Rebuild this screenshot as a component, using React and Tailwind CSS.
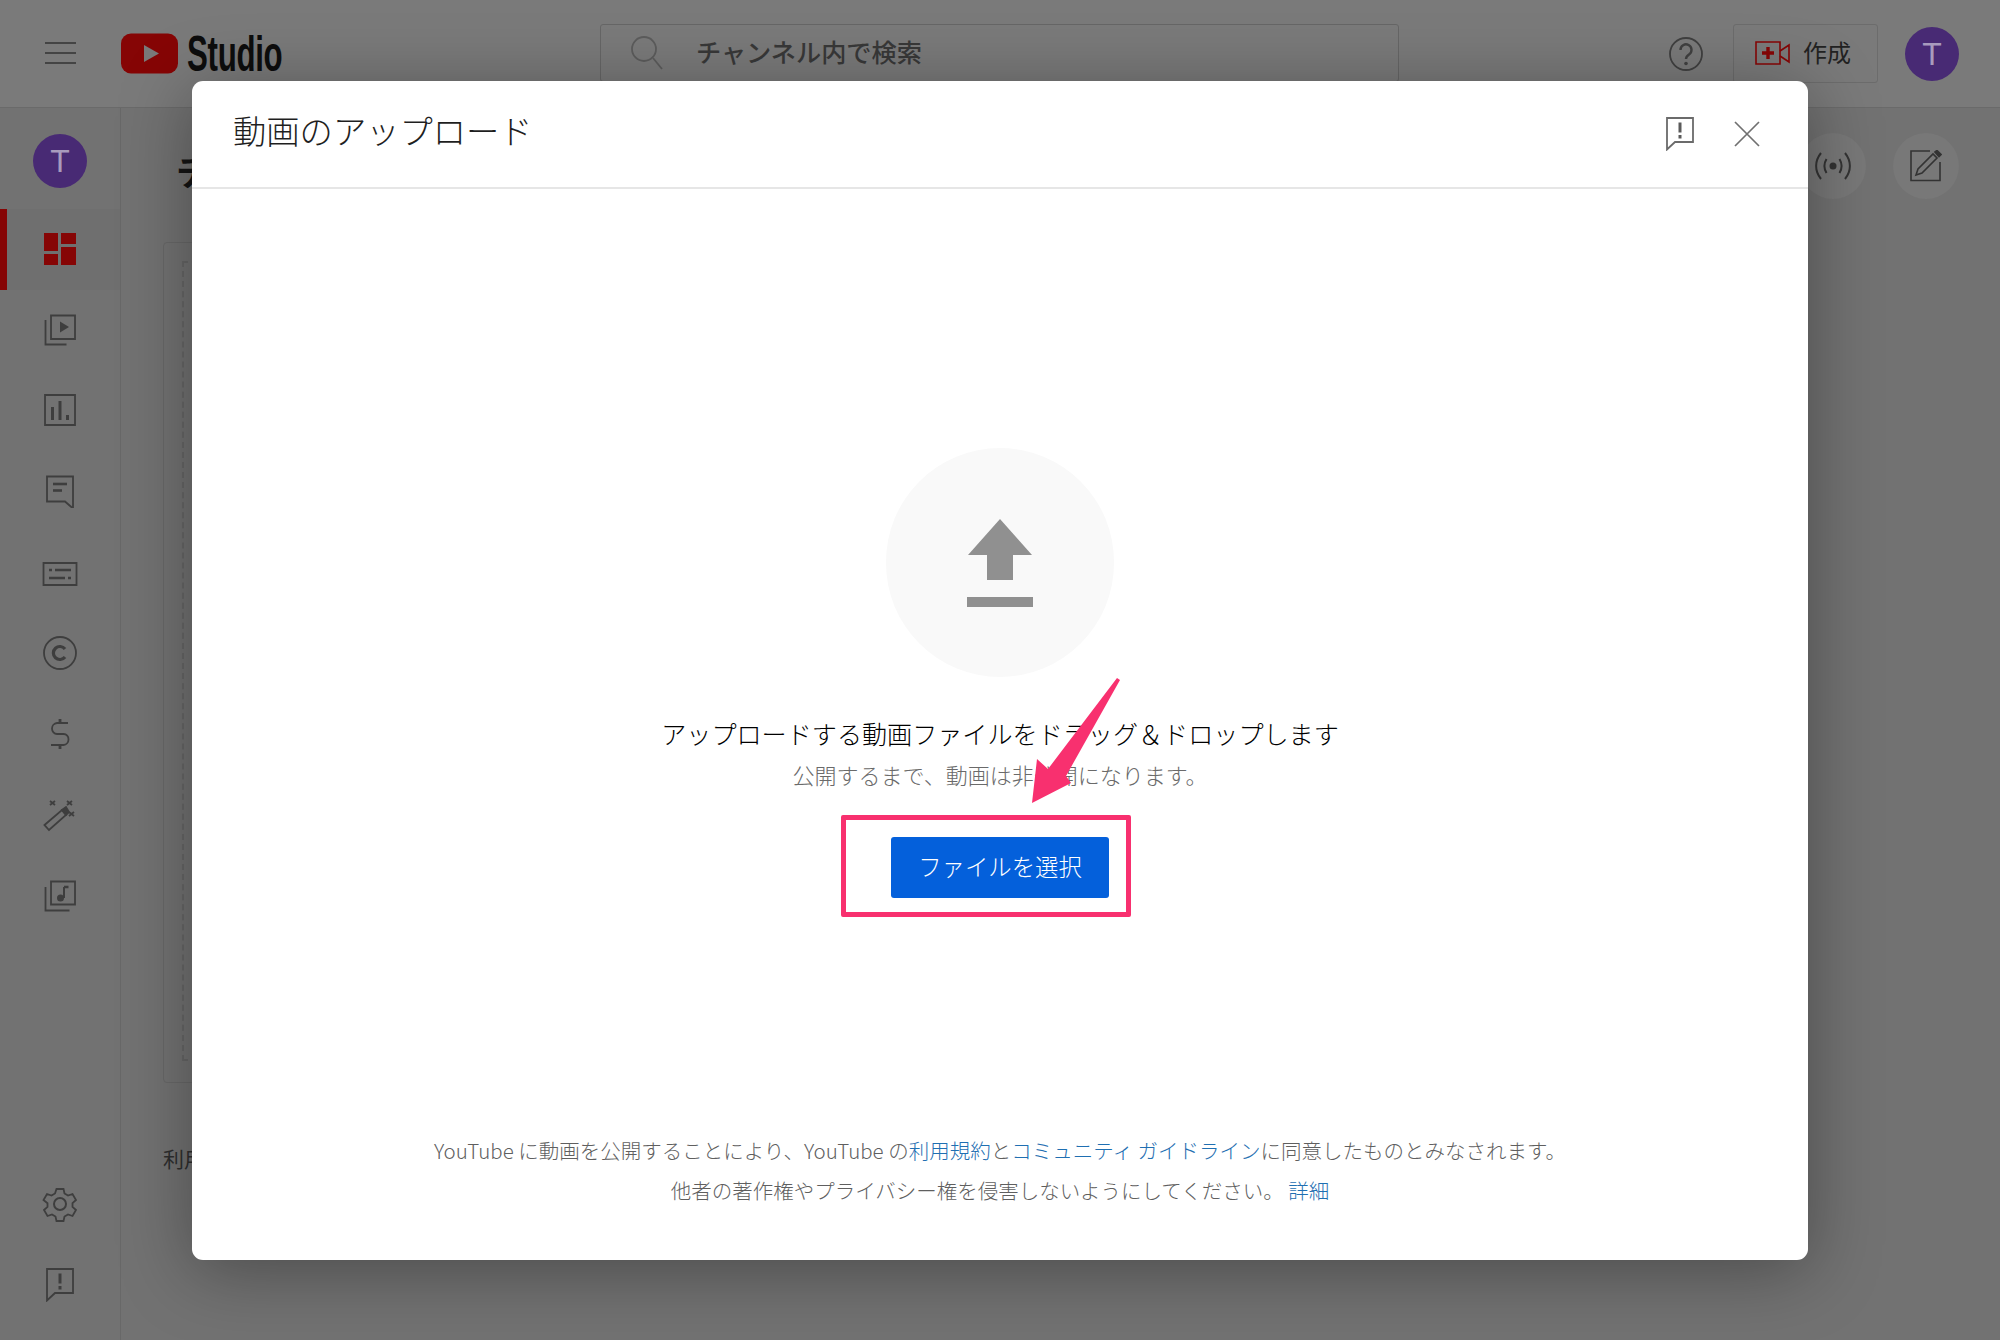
import React from "react";

const JP = { fontFamily: '"Noto Sans CJK JP", sans-serif' };

function I({ children, w = 36, h = 36, vb = "0 0 36 36", className = "" }) {
  return (
    <svg width={w} height={h} viewBox={vb} fill="none" stroke="#3e3e3e" strokeWidth="1.800" className={className}>
      {children}
    </svg>
  );
}

const rows = [
  <I key="content">
    <path d="M9 4.500h24v23.500H9z" />
    <path d="M3.500 9v24.500h21" />
    <path d="M18 10.500l9 5.500-9 5.500z" fill="#3e3e3e" stroke="none" />
  </I>,
  <I key="analytics">
    <path d="M3 3h30v30H3z" />
    <path d="M10.500 15v13M18 9v19M25.500 23v5" strokeWidth="3" />
  </I>,
  <I key="comments" className="mt-[-2px]">
    <path d="M5 4.500h26v32l-8-7H5z" />
    <path d="M11 12h14" strokeWidth="2.600" />
    <path d="M11 18.500h9" strokeWidth="2.600" />
  </I>,
  <I key="subtitles" className="mt-[4px]">
    <path d="M1.500 7h33v22H1.500z" />
    <path d="M7 14h3M13 14h16M7 22h16M26 22h3" strokeWidth="2.600" />
  </I>,
  <I key="copyright">
    <circle cx="18" cy="18" r="16" />
    <path d="M23 14a6.500 6.500 0 1 0 0 8" strokeWidth="3.200" />
  </I>,
  <I key="earn">
    <path d="M26 7H15a5.500 5.500 0 0 0-5 5.500c0 3 2.200 5.500 5 5.500h6.500a5 5 0 0 1 5 5.500 5.500 5.500 0 0 1-5 5.500H9" />
    <path d="M18 3v4M18 29v4" strokeWidth="2.800" />
  </I>,
  <I key="wand">
    <path d="M2.500 28L20 13l4 5L7 33z" />
    <path d="M20 13l4 5 3-3-3-5z" fill="#3e3e3e" />
    <path d="M8 4l5 4M13 4l-5 4M25 4l5 4M30 4l-5 4M27 15l5 4M32 15l-5 4" strokeWidth="1.800" />
  </I>,
  <I key="audio">
    <path d="M9 3.500h24v23H9z" />
    <path d="M3.500 9v23.500h24" />
    <path d="M22 9v11" strokeWidth="2" />
    <path d="M22 9h4.500" strokeWidth="2.500" />
    <circle cx="18.500" cy="20" r="3.500" fill="#3e3e3e" stroke="none" />
  </I>,
];

function Row({ children, active }) {
  return (
    <div className={`h-[81px] flex items-center justify-center relative ${active ? "bg-[#6f6f6f] pb-[1px]" : "pb-[3px]"}`}>
      {active && <div className="absolute left-0 top-0 bottom-0 w-[7px] bg-[#860505]" />}
      {children}
    </div>
  );
}

function Avatar({ size, text }) {
  return (
    <div
      className="rounded-full bg-[#482a74] text-[#a89bbd] flex items-center justify-center shrink-0"
      style={{ width: size, height: size, fontSize: text, fontFamily: '"Liberation Sans", sans-serif' }}
    >
      T
    </div>
  );
}

function Feedback({ stroke = "#3e3e3e", fill = "#3e3e3e" }) {
  return (
    <svg width="28" height="34" viewBox="0 0 28 34" fill="none" stroke={stroke} strokeWidth="1.800">
      <path d="M1 1h26v24H9l-8 7.500z" />
      <path d="M14 5.500v10M14 18v3.500" stroke={fill} strokeWidth="3" />
    </svg>
  );
}

export default function App() {
  return (
    <div className="relative w-[2000px] h-[1340px] overflow-hidden bg-[#727272] text-[#1a1a1a]" style={JP}>
      {/* Dimmed page */}
      <header className="h-[108px] bg-[#7a7a7a] border-b border-[#6a6a6a] flex items-center">
        <div className="w-[121px] pl-[45px] pb-[2px] shrink-0">
          <div className="w-[31px] h-[22px] flex flex-col justify-between">
            <div className="h-[2px] bg-[#444]" />
            <div className="h-[2px] bg-[#444]" />
            <div className="h-[2px] bg-[#444]" />
          </div>
        </div>
        <svg width="57" height="41" viewBox="0 0 57 41" className="shrink-0">
          <rect width="57" height="40" y="0.500" rx="10" fill="#860505" />
          <path d="M23 12l15 8.500L23 29z" fill="#7a7a7a" />
        </svg>
        <div
          className="w-[94px] ml-[9px] h-[50px] shrink-0 text-[50px] leading-[50px] font-bold text-[#0d0d0d] origin-left scale-x-[0.625] tracking-[-0.5px]"
          style={{ fontFamily: '"Liberation Sans", sans-serif' }}
        >
          Studio
        </div>
        <div className="ml-[319px] w-[799px] h-[58px] mt-[-2px] border border-[#666] rounded-[3px] flex items-center pl-[29px] shrink-0">
          <svg width="34" height="36" viewBox="0 0 34 36" fill="none" stroke="#5c5c5c" strokeWidth="1.800">
            <circle cx="14" cy="14" r="12" />
            <path d="M23 23l9 11" />
          </svg>
          <span className="ml-[32px] mt-[-2px] text-[25.200px] font-medium text-[#383838]">チャンネル内で検索</span>
        </div>
        <svg width="34" height="34" viewBox="0 0 34 34" fill="none" className="ml-[270px] shrink-0">
          <circle cx="17" cy="17" r="16" stroke="#404040" strokeWidth="1.800" />
          <path d="M11.500 13a5.500 5.500 0 1 1 8.500 4.500c-2 1.300-3 2.300-3 4.500" stroke="#404040" strokeWidth="2.400" />
          <circle cx="17" cy="26.500" r="1.800" fill="#404040" />
        </svg>
        <div className="ml-[30px] w-[145px] h-[59px] mt-[-1px] border border-[#6c6c6c] rounded-[3px] flex items-center pl-[21px] shrink-0">
          <svg width="35" height="24" viewBox="0 0 35 24" fill="none">
            <path d="M1 1h24v22H1z" stroke="#860505" strokeWidth="1.600" />
            <path d="M7 12h12M13 6v12" stroke="#860505" strokeWidth="3.400" />
            <path d="M25 10l9-6v17l-9-6" stroke="#860505" strokeWidth="1.600" />
          </svg>
          <span className="ml-[13px] mt-[-3px] text-[24px] text-[#222]">作成</span>
        </div>
        <div className="ml-[27px]">
          <Avatar size={54} text={32} />
        </div>
      </header>

      <div className="flex h-[1232px]">
        <aside className="w-[121px] border-r border-[#686868] flex flex-col shrink-0">
          <div className="h-[101px] flex items-center justify-center pt-[5px]">
            <Avatar size={54} text={32} />
          </div>
          <Row active>
            <svg width="32" height="32" viewBox="0 0 32 32" fill="#860505">
              <path d="M0 0h14v18H0zM17 0h15v11H17zM0 21h14v11H0zM17 14h15v18H17z" />
            </svg>
          </Row>
          {rows.map((r, i) => (
            <Row key={i}>{r}</Row>
          ))}
          <div className="mt-auto h-[81px] flex items-center justify-center">
            <I>
              <path d="M14.500 3h7l1 4.500 3.500 2 4.500-1.500 3.500 6-3.500 3.200v3.600l3.500 3.200-3.500 6-4.500-1.500-3.500 2-1 4.500h-7l-1-4.500-3.500-2-4.500 1.500-3.500-6 3.500-3.200v-3.600L1.500 14l3.500-6 4.500 1.500 3.500-2z" />
              <circle cx="18" cy="18" r="6" strokeWidth="2" />
            </I>
          </div>
          <div className="h-[81px] mb-[15px] flex items-center justify-center">
            <Feedback />
          </div>
        </aside>
        <main className="flex-1 relative pl-[42px]">
          <div className="pt-[38px] pl-[13px] text-[36px] leading-[48px] font-bold text-[#141414]">チャンネル</div>
          <div className="mt-[48px] w-[1600px] h-[841px] border border-[#686868] rounded-[4px] p-[18px]">
            <div className="w-full h-[800px] border-2 border-dashed border-[#666]" />
          </div>
          <div className="mt-[60px] text-[21px] text-[#2e2e2e]">利用</div>
          <div className="absolute left-[1679px] top-[25px] w-[66px] h-[66px] rounded-full bg-[#787878] flex items-center justify-center">
            <svg width="36" height="28" viewBox="0 0 36 28" fill="none" stroke="#333" strokeWidth="2">
              <path d="M6 1C-.5 9-.5 19 6 27M30 1c6.500 8 6.500 18 0 26M11.500 7c-3 5-3 9 0 14M24.500 7c3 5 3 9 0 14" />
              <circle cx="18" cy="14" r="3.500" fill="#333" stroke="none" />
            </svg>
          </div>
          <div className="absolute left-[1772px] top-[25px] w-[66px] h-[66px] rounded-full bg-[#787878] flex items-center justify-center">
            <svg width="32" height="32" viewBox="0 0 32 32" fill="none" stroke="#333" strokeWidth="1.600">
              <path d="M20 1H1v29.500h29V12" />
              <path d="M6 25l2-6L23 4l4 4-15 15z" />
              <path d="M25 2l2-1.500 4 4-2 2z" fill="#333" />
            </svg>
          </div>
        </main>
      </div>

      {/* Upload dialog */}
      <section className="absolute left-[192px] top-[81px] w-[1616px] h-[1179px] bg-white rounded-[11px] shadow-[0_10px_70px_rgba(0,0,0,0.35)] flex flex-col">
        <div className="h-[108px] border-b-2 border-[#e6e6e6] flex items-center pl-[41px] pr-[48px] shrink-0">
          <h1 className="text-[33.300px] leading-none font-light text-[#1f1f1f] mt-[-9px]">動画のアップロード</h1>
          <div className="ml-auto flex items-center gap-[40px]">
            <Feedback stroke="#6b6b6b" fill="#5a5a5a" />
            <svg width="26" height="26" viewBox="0 0 26 26" stroke="#707070" strokeWidth="1.700">
              <path d="M1 1l24 24M25 1L1 25" />
            </svg>
          </div>
        </div>

        <div className="flex-1 flex flex-col items-center pt-[259px]">
          <div className="w-[228px] h-[229px] rounded-full bg-[#f9f9f9] flex items-center justify-center shrink-0">
            <svg width="68" height="88" viewBox="0 0 68 88" fill="#909090">
              <path d="M34 0l32 36H47v25H21V36H2z" />
              <path d="M1 78h66v10H1z" />
            </svg>
          </div>
          <p className="mt-[38px] text-[25.100px] leading-[36px] font-light text-black">
            アップロードする動画ファイルをドラッグ＆ドロップします
          </p>
          <p className="mt-[8px] text-[22px] leading-[30px] font-light text-[#6a6a6a]">
            公開するまで、動画は非公開になります。
          </p>
          <button className="mt-[48px] w-[218px] h-[61px] rounded-[3px] bg-[#0460db] text-white text-[23.400px] font-light flex items-center justify-center pb-[2px]">
            ファイルを選択
          </button>
        </div>

        <div className="pb-[50px] text-center text-[20.500px] leading-[40px] font-light text-[#5f5f5f] shrink-0">
          <p>
            YouTube に動画を公開することにより、YouTube の<span className="text-[#1f6fb2]">利用規約</span>と
            <span className="text-[#1f6fb2]">コミュニティ ガイドライン</span>に同意したものとみなされます。
          </p>
          <p>
            他者の著作権やプライバシー権を侵害しないようにしてください。 <span className="text-[#1f6fb2]">詳細</span>
          </p>
        </div>
      </section>

      {/* Annotation */}
      <div className="absolute left-[841px] top-[815px] w-[290px] h-[102px] border-[5px] border-[#f8306f] rounded-[2px]" />
      <svg className="absolute left-[1020px] top-[670px]" width="110" height="145" viewBox="0 0 110 145">
        <path d="M97 8L100 10 46 106 51 113 12 133 17 89 28 99z" fill="#f8306f" />
      </svg>
    </div>
  );
}
